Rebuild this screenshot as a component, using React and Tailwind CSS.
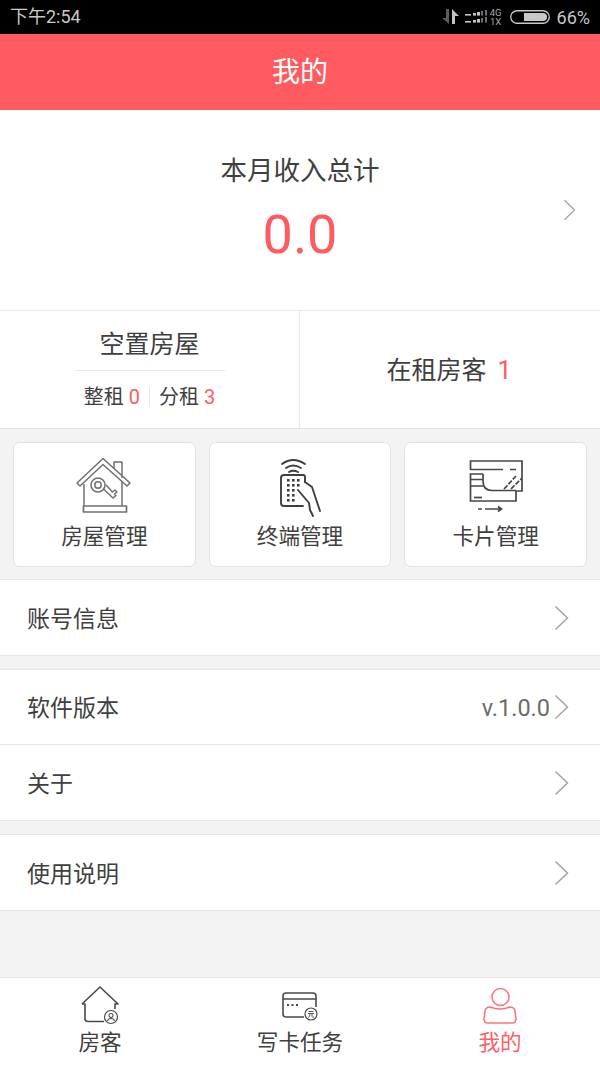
import React from 'react';

const FONT = "font-['Roboto','Noto_Sans_CJK_SC',sans-serif]";

const Chevron = ({ className = 'w-[15px] h-[26px]' }) => (
  <svg viewBox="0 0 15 26" className={className} fill="none" stroke="#a3a3a3" strokeWidth="1.5">
    <path d="M1.5 1.5 L13.5 13 L1.5 24.5" />
  </svg>
);

const StatusIcons = () => (
  <div className="flex items-center">
    <svg width="17" height="16" viewBox="0 0 17 16" className="mr-[6px]">
      <path d="M7 0 V15 L0 9 H4 V0 Z" fill="#5c5c5c" />
      <path d="M10 15 V0 L17 7 H13 V15 Z" fill="#c4c4c4" />
    </svg>
    <svg width="23" height="14" viewBox="0 0 23 14" className="mr-[2px]" fill="#c4c4c4">
      <rect x="0" y="4" width="6" height="1.6" />
      <rect x="8" y="3" width="3" height="2.6" />
      <rect x="12" y="2" width="3" height="3.6" />
      <rect x="16" y="1" width="2" height="4.6" fill="#6b6b6b" />
      <rect x="20" y="0" width="2" height="5.6" fill="#6b6b6b" />
      <rect x="0" y="11" width="6" height="1.6" />
      <rect x="8" y="10" width="3" height="2.6" />
      <rect x="12" y="9" width="3" height="3.6" />
      <rect x="16" y="8" width="2" height="4.6" fill="#6b6b6b" />
      <rect x="20" y="7" width="2" height="5.6" fill="#6b6b6b" />
    </svg>
    <div className="flex flex-col items-center w-[12px] mr-[8px] text-[9.5px] leading-[9px] text-[#a8a8a8]">
      <span>4G</span>
      <span>1X</span>
    </div>
    <svg width="40" height="14" viewBox="0 0 40 14" className="mr-[7px]">
      <rect x="0.75" y="0.75" width="38.5" height="12.5" rx="6.25" fill="none" stroke="#c8c8c8" strokeWidth="1.3" />
      <path d="M14 3 H33 a4 4 0 0 1 0 8 H14 Z" fill="#c8c8c8" />
    </svg>
  </div>
);

const HouseKey = () => (
  <svg width="90" height="75" viewBox="0 0 90 75" fill="none" stroke="#707070" strokeWidth="1.5" strokeLinejoin="round">
    <path d="M44 13.5 L71 38 L68 41 L44 19.5 L21 41 L18 38 Z" />
    <path d="M55 24 V17 H63 V33" />
    <path d="M25 39 V61 M63 37 V61" />
    <rect x="24.5" y="61" width="43" height="6" strokeWidth="1.7" />
    <circle cx="39" cy="40" r="7" />
    <circle cx="39" cy="40" r="3.2" />
    <path d="M44.5 44 L54 53 L57 50.5 L55.5 49 L58 47 L56 45 L53.5 47 L47 40" />
  </svg>
);

const Remote = () => (
  <svg width="80" height="75" viewBox="0 0 80 75" fill="none" stroke="#3f3f3f" strokeWidth="1.9" strokeLinecap="round" strokeLinejoin="round">
    <path d="M22 19 Q33 11 45 19" />
    <path d="M26 23 Q33 18 41 23" />
    <path d="M29 27 Q33 24.5 38 27" />
    <path d="M45 37 V32 Q45 30 43 30 H24 Q21 30 21 33 V58 Q21 61 24 61 H43" />
    <path d="M45 37 L52 42 L60 66" />
    <path d="M38 45 L49 58 L50 65 L53 71" />
    <g fill="#3f3f3f" stroke="none">
      <rect x="27" y="34" width="2.6" height="2.6" />
      <rect x="32" y="34" width="2.6" height="2.6" />
      <rect x="37" y="34" width="2.6" height="2.6" />
      <rect x="27" y="39" width="2.6" height="2.6" />
      <rect x="32" y="39" width="2.6" height="2.6" />
      <rect x="37" y="39" width="2.6" height="2.6" />
      <rect x="27" y="44" width="2.6" height="2.6" />
      <rect x="32" y="44" width="2.6" height="2.6" />
      <rect x="27" y="49" width="2.6" height="2.6" />
      <rect x="32" y="49" width="2.6" height="2.6" />
      <rect x="27" y="54" width="2.6" height="2.6" />
      <rect x="32" y="54" width="2.6" height="2.6" />
    </g>
  </svg>
);

const Cards = () => (
  <svg width="80" height="70" viewBox="0 0 80 70" fill="none" stroke="#474747" strokeWidth="1.7" className="mt-[6px]">
    <path d="M14.5 19 V10 H66 V40 H60" />
    <path d="M14.5 18.5 H47 M54 18.5 H60" />
    <path d="M27 23 H14.5 V50 H60 V40" />
    <path d="M14.5 28.5 H27 M14.5 35 H27" />
    <path d="M27 23 V30 Q27 39.5 36 39.5 H60" />
    <path d="M48 38 L60 25 M55 38 L66 27" strokeDasharray="5 1.5" />
    <path d="M18 46.5 H26" />
    <path d="M22 58 H26 M29 58 H45 M42 55.5 L45.5 58 L42 60.5" />
  </svg>
);

const TabHouse = () => (
  <svg width="40" height="40" viewBox="0 0 40 40" fill="none" stroke="#4a4a4a" strokeWidth="1.6" strokeLinejoin="round">
    <path d="M2 19 L20 2 L38 19 H35 V24" />
    <path d="M2 19 H5 V34 Q5 36.5 8 36.5 H24" />
    <circle cx="31" cy="32" r="6.5" strokeWidth="1.2" />
    <circle cx="31" cy="30.5" r="2" strokeWidth="1.1" />
    <path d="M27.5 36 Q28 33.5 31 33.5 Q34 33.5 34.5 36" strokeWidth="1.1" />
  </svg>
);

const TabCard = () => (
  <svg width="38" height="30" viewBox="0 0 38 30" fill="none" stroke="#4a4a4a" strokeWidth="1.6" className="mb-[4px]">
    <path d="M23 26 H5 Q2 26 2 23 V5 Q2 2 5 2 H32 Q35 2 35 5 V16" />
    <path d="M2 8 H35" />
    <path d="M6 14 H8 M10.5 14 H12.5 M15 14 H17" strokeWidth="2" />
    <circle cx="30" cy="23" r="6" strokeWidth="1.2" />
    <path d="M27.5 20.5 H32.5 M27 22.5 H33 M29 23 Q29 26 27 26.5 M31 23 V25.5 Q31 26.5 33 26" strokeWidth="0.9" />
  </svg>
);

const TabUser = () => (
  <svg width="36" height="38" viewBox="0 0 36 38" fill="none" stroke="#f9777c" strokeWidth="1.6">
    <circle cx="18.5" cy="10" r="8.5" />
    <path d="M8 20 Q4 20 3 24 L2 32 Q2 36 6 36 H30 Q34 36 34 32 L33 24 Q32 20 28 20 Q18.5 24 8 20 Z" />
  </svg>
);

const Row = ({ label, value, tall }) => (
  <div className={`${tall ? 'h-[76px]' : 'h-[75px]'} flex items-center bg-white pl-[27px] pr-[31px] border-b border-[#e6e6e6]`}>
    <span className="text-[23px] mt-[5px] text-[#3f3f3f]">{label}</span>
    {value && <span className="ml-auto mr-[4px] mt-[3px] text-[23.5px] text-[#6b6b6b]">{value}</span>}
    <span className={value ? '' : 'ml-auto'}><Chevron /></span>
  </div>
);

const Card = ({ icon, label }) => (
  <div className="h-[125px] bg-white border border-[#e2e2e2] rounded-[7px] flex flex-col items-center">
    <div className="h-[79px] flex items-center justify-center">{icon}</div>
    <span className="text-[21.6px] leading-[30px] text-[#3f3f3f]">{label}</span>
  </div>
);

const Tab = ({ icon, label, active }) => (
  <div className="flex-1 flex flex-col items-center">
    <div className="h-[40px] flex items-end justify-center">{icon}</div>
    <span className={`mt-[3px] text-[21.6px] leading-[30px] ${active ? 'text-[#ff6167]' : 'text-[#3f3f3f]'}`}>{label}</span>
  </div>
);

export default function App() {
  return (
    <div className={`w-[600px] h-[1067px] overflow-hidden flex flex-col bg-[#f3f3f3] ${FONT}`}>
      <div className="h-[34px] bg-black flex items-center pl-[10px] pr-[10px] text-[#c8c8c8] text-[18px]">
        <span className="-mt-[1px]">下午2:54</span>
        <div className="ml-auto flex items-center">
          <StatusIcons />
          <span>66%</span>
        </div>
      </div>
      <div className="h-[76px] bg-[#ff5a5f] flex items-center justify-center text-white text-[28px]">
        <span className="mt-[1px]">我的</span>
      </div>

      <div className="h-[201px] bg-white border-b border-[#e6e6e6] relative flex flex-col items-center pt-[41px]">
        <span className="text-[26.5px] leading-[40px] text-[#3f3f3f]">本月收入总计</span>
        <span className="text-[54px] leading-[66px] mt-[11px] text-[#ff5a5f]">0.0</span>
        <div className="absolute right-[24px] top-[89px]">
          <Chevron className="w-[13px] h-[22px]" />
        </div>
      </div>

      <div className="h-[118px] bg-white border-b border-[#e2e2e2] flex">
        <div className="w-[300px] border-r border-[#e6e6e6] flex flex-col items-center">
          <div className="w-[150px] h-[60px] border-b border-[#e6e6e6] flex items-center justify-center pt-[9px] text-[25px] text-[#3f3f3f]">空置房屋</div>
          <div className="flex items-center h-[52px] text-[20px] text-[#3f3f3f]">
            <span>整租</span>
            <span className="ml-[5px] text-[#ff5a5f]">0</span>
            <span className="mx-[9px] w-px h-[20px] bg-[#e6e6e6]" />
            <span>分租</span>
            <span className="ml-[5px] text-[#ff5a5f]">3</span>
          </div>
        </div>
        <div className="flex-1 flex items-center justify-center pt-[3px] pr-[2px] text-[25px] text-[#3f3f3f]">
          <span>在租房客</span>
          <span className="ml-[11px] text-[#ff5a5f]">1</span>
        </div>
      </div>

      <div className="grid grid-cols-3 gap-[13px] px-[13px] pt-[13px] pb-[12px] border-b border-[#e6e6e6]">
        <Card icon={<HouseKey />} label="房屋管理" />
        <Card icon={<Remote />} label="终端管理" />
        <Card icon={<Cards />} label="卡片管理" />
      </div>

      <Row label="账号信息" tall />
      <div className="h-[14px] border-b border-[#e6e6e6]" />
      <Row label="软件版本" value="v.1.0.0" />
      <Row label="关于" tall />
      <div className="h-[14px] border-b border-[#e6e6e6]" />
      <Row label="使用说明" tall />

      <div className="flex-1" />

      <div className="h-[90px] bg-white border-t border-[#e2e2e2] flex pt-[7px]">
        <Tab icon={<TabHouse />} label="房客" />
        <Tab icon={<TabCard />} label="写卡任务" />
        <Tab icon={<TabUser />} label="我的" active />
      </div>
    </div>
  );
}
